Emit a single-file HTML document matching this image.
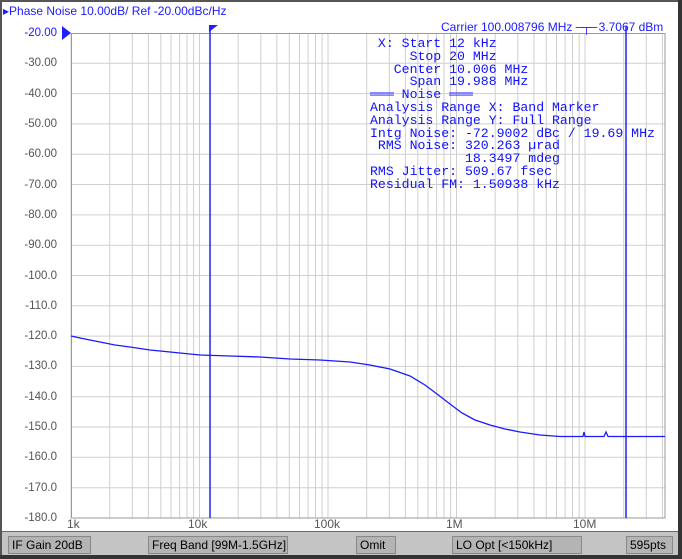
<!DOCTYPE html>
<html><head><meta charset="utf-8"><style>
body{margin:0;width:682px;height:559px;overflow:hidden;background:#fff;font-family:"Liberation Sans",sans-serif}
.abs{position:absolute}
.btn{position:absolute;top:536px;height:18px;background:#b4b4b4;border:1px solid #888;box-sizing:border-box;font-size:12px;line-height:16px;color:#000;padding:0 3px;white-space:nowrap}
.mono{font-family:"Liberation Mono",monospace;font-size:13.2px;color:#1010ff;white-space:pre;line-height:12.8px}
</style></head><body>
<svg class="abs" style="left:0;top:0" width="682" height="559">
<rect x="0" y="0" width="682" height="559" fill="#fff"/>
<rect x="0" y="0" width="682" height="2" fill="#555"/>
<rect x="0" y="0" width="2" height="559" fill="#555"/>
<rect x="678" y="0" width="4" height="559" fill="#333"/>
<rect x="0" y="555" width="682" height="4" fill="#333"/>
<rect x="2" y="531" width="676" height="24" fill="#c4c4c4"/>
<line x1="2" y1="531.5" x2="678" y2="531.5" stroke="#666"/>
<g stroke="#cfcfcf" stroke-width="1">
<path d="M71 33V518M109.7 33V518M132.3 33V518M148.4 33V518M160.8 33V518M171 33V518M179.6 33V518M187 33V518M193.6 33V518M199.5 33V518M238.2 33V518M260.8 33V518M276.9 33V518M289.3 33V518M299.5 33V518M308.1 33V518M315.5 33V518M322.1 33V518M328 33V518M366.7 33V518M389.3 33V518M405.4 33V518M417.8 33V518M428 33V518M436.6 33V518M444 33V518M450.6 33V518M456.5 33V518M495.2 33V518M517.8 33V518M533.9 33V518M546.3 33V518M556.5 33V518M565.1 33V518M572.5 33V518M579.1 33V518M585 33V518M623.7 33V518M646.3 33V518M662.4 33V518"/>
<path d="M71 63.3H665M71 93.6H665M71 123.9H665M71 154.2H665M71 184.5H665M71 214.9H665M71 245.2H665M71 275.5H665M71 305.8H665M71 336.1H665M71 366.4H665M71 396.7H665M71 427H665M71 457.3H665M71 487.7H665"/>
</g>
<rect x="71.5" y="33.5" width="593.5" height="484.5" fill="none" stroke="#999"/>
<line x1="210" y1="26" x2="210" y2="518" stroke="#2020ff" stroke-width="1.5"/>
<polygon points="209,25 218,25 209,32" fill="#2020ff"/>
<line x1="626" y1="26" x2="626" y2="518" stroke="#2020ff" stroke-width="1.5"/>
<polygon points="62,26 71,33 62,40" fill="#2020ff"/>
<polyline fill="none" stroke="#1a1aff" stroke-width="1.3" points="71,336 80,338 90,340 100,342 115,345 130,347 150,350 170,352 200,355 230,356 260,357 290,359 320,360 350,362 370,365 390,369 410,376 425,385 437,394 450,404 462,413 475,420 490,425 505,429 520,432 540,435 560,436.5 583,436.5 584,432 585,436.5 604,436.5 606,432 608,436.5 665,436.5"/>
</svg>
<div class="abs" style="left:3px;top:4px;font-size:12px;color:#1a1aff">▸Phase Noise 10.00dB/ Ref -20.00dBc/Hz</div>
<div class="abs" style="left:441px;top:20px;font-size:12px;color:#1a1aff;white-space:nowrap">Carrier 100.008796 MHz <span style="letter-spacing:-2px">─┬─</span> 3.7067 dBm</div>
<div class="abs" style="left:0;top:18px;width:57px;text-align:right;font-size:11.5px;line-height:30.31px;color:#555">
<div style="color:#1a1aff">-20.00</div><div>-30.00</div><div>-40.00</div><div>-50.00</div><div>-60.00</div><div>-70.00</div><div>-80.00</div><div>-90.00</div><div>-100.0</div><div>-110.0</div><div>-120.0</div><div>-130.0</div><div>-140.0</div><div>-150.0</div><div>-160.0</div><div>-170.0</div><div>-180.0</div></div>
<div class="abs" style="top:517px;left:0;font-size:12px;color:#555;width:682px">
<span class="abs" style="left:67px">1k</span><span class="abs" style="left:188px">10k</span><span class="abs" style="left:314px">100k</span><span class="abs" style="left:446px">1M</span><span class="abs" style="left:573px">10M</span></div>
<div class="abs mono" style="left:370px;top:38px"> X: Start 12 kHz
     Stop 20 MHz
   Center 10.006 MHz
     Span 19.988 MHz
═══ Noise ═══
Analysis Range X: Band Marker
Analysis Range Y: Full Range
Intg Noise: -72.9002 dBc / 19.69 MHz
 RMS Noise: 320.263 µrad
            18.3497 mdeg
RMS Jitter: 509.67 fsec
Residual FM: 1.50938 kHz</div>
<div class="btn" style="left:8px;width:83px">IF Gain 20dB</div>
<div class="btn" style="left:148px;width:140px">Freq Band [99M-1.5GHz]</div>
<div class="btn" style="left:356px;width:40px">Omit</div>
<div class="btn" style="left:452px;width:130px">LO Opt [&lt;150kHz]</div>
<div class="btn" style="left:626px;width:47px">595pts</div>
</body></html>
